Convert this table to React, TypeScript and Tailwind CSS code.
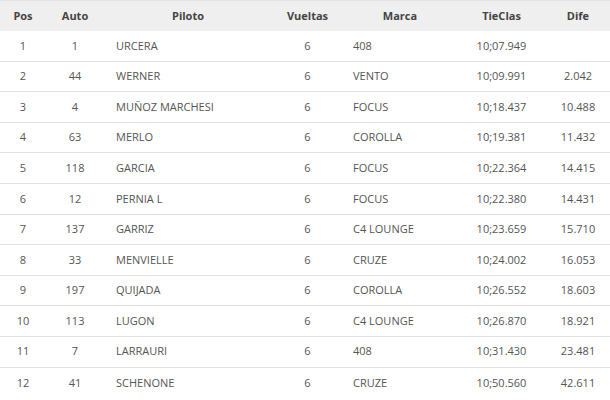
const filas = [
  ["1", "1", "URCERA", "6", "408", "10;07.949", ""],
  ["2", "44", "WERNER", "6", "VENTO", "10;09.991", "2.042"],
  ["3", "4", "MUÑOZ MARCHESI", "6", "FOCUS", "10;18.437", "10.488"],
  ["4", "63", "MERLO", "6", "COROLLA", "10;19.381", "11.432"],
  ["5", "118", "GARCIA", "6", "FOCUS", "10;22.364", "14.415"],
  ["6", "12", "PERNIA L", "6", "FOCUS", "10;22.380", "14.431"],
  ["7", "137", "GARRIZ", "6", "C4 LOUNGE", "10;23.659", "15.710"],
  ["8", "33", "MENVIELLE", "6", "CRUZE", "10;24.002", "16.053"],
  ["9", "197", "QUIJADA", "6", "COROLLA", "10;26.552", "18.603"],
  ["10", "113", "LUGON", "6", "C4 LOUNGE", "10;26.870", "18.921"],
  ["11", "7", "LARRAURI", "6", "408", "10;31.430", "23.481"],
  ["12", "41", "SCHENONE", "6", "CRUZE", "10;50.560", "42.611"],
];

const columnas = ["Pos", "Auto", "Piloto", "Vueltas", "Marca", "TieClas", "Dife"];

// alineación de cada columna en las filas de datos
const celdas = [
  "text-center",
  "text-center",
  "text-left pl-3",
  "text-center",
  "text-left pl-[10px]",
  "text-center",
  "text-center",
];

const grilla = "grid grid-cols-[46px_58px_168px_71px_114px_89px_64px]";

export default function App() {
  return (
    <div className="w-[610px] h-[400px] overflow-hidden bg-white font-['Open_Sans',sans-serif] text-[11px] text-[#555]">
      <div className={`${grilla} h-[31px] items-center border-t border-[#e4e4e4] bg-[#efefef] font-bold text-[#444]`}>
        {columnas.map((c) => (
          <div key={c} className="text-center">
            {c}
          </div>
        ))}
      </div>
      {filas.map((fila, i) => (
        <div
          key={fila[0]}
          className={`${grilla} h-[30.6px] items-center ${i < filas.length - 1 ? "border-b border-[#e2e2e2]" : ""}`}
        >
          {fila.map((valor, j) => (
            <div key={j} className={celdas[j]}>
              {valor}
            </div>
          ))}
        </div>
      ))}
    </div>
  );
}
